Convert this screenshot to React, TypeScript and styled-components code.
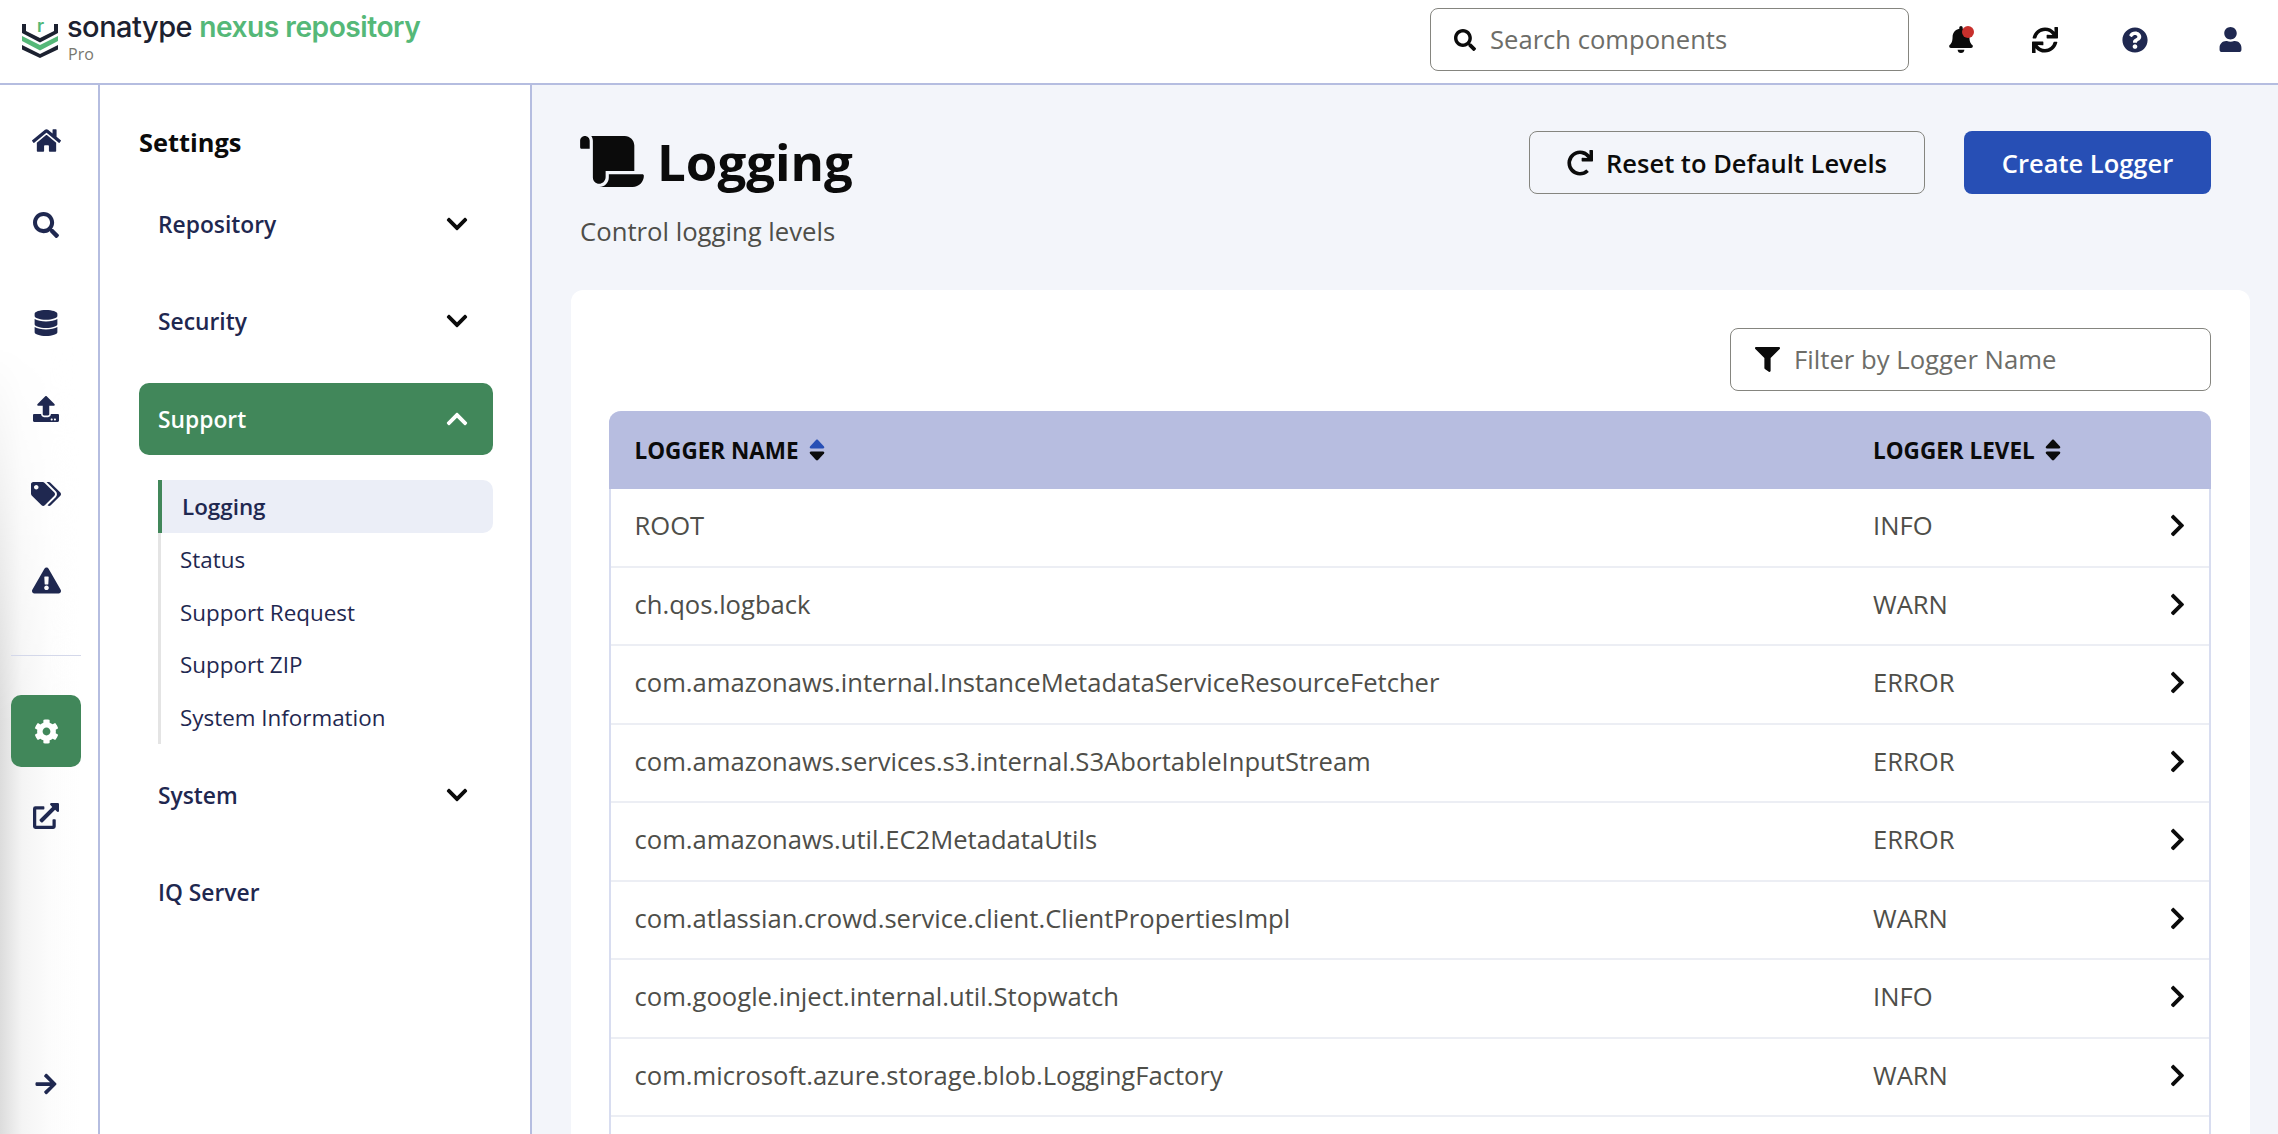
import React from "react";
import styled, { createGlobalStyle } from "styled-components";
import {
  FaHome, FaSearch, FaDatabase, FaUpload, FaTags, FaExclamationTriangle, FaCog,
  FaExternalLinkAlt, FaArrowRight, FaChevronDown, FaChevronUp, FaChevronRight,
  FaBell, FaSync, FaQuestionCircle, FaUser, FaRedo, FaFilter, FaScroll,
} from "react-icons/fa";

const NAVY = "#1f2850";
const GREEN = "#41875a";
const LINE = "#b5bde0";
const BODY = '"Open Sans", "Noto Sans", sans-serif';

const Global = createGlobalStyle`
  html, body { margin: 0; padding: 0; height: 100%; background: #fff; overflow: hidden; }
  #root { height: 100%; }
  * { box-sizing: border-box; }
  body { font-family: ${BODY}; }
`;

const Page = styled.div`
  display: flex; flex-direction: column; width: 100%; height: 100vh; overflow: hidden;
`;
const Header = styled.header`
  flex: 0 0 85px; display: flex; align-items: center; justify-content: space-between;
  background: #fff; border-bottom: 2px solid ${LINE}; padding: 0 34.5px 4px 22px;
`;
const Brand = styled.div`display: flex; align-items: flex-start; gap: 10px; height: 58px;`;
const LogoMark = styled.svg`margin-top: 9.5px; overflow: visible;`;
const BrandText = styled.div`display: flex; flex-direction: column; margin-top: -1px; margin-left: -1px;`;
const BrandLine = styled.div`
  display: flex; gap: 7px; font-family: Inter, sans-serif; font-size: 29px; line-height: 34px;
  font-weight: 500; letter-spacing: -0.5px;
`;
const BrandDark = styled.span`color: #1c2130;`;
const BrandGreen = styled.span`color: #55b878; font-weight: 600; font-size: 28.2px;`;
const BrandEdition = styled.span`font-size: 16px; line-height: 20px; color: #77776f; margin-left: 1px;`;
const HeaderTools = styled.div`display: flex; align-items: center;`;
const SearchBox = styled.div`
  width: 479px; height: 63px; display: flex; align-items: center; gap: 14px; padding-left: 23px;
  border: 1px solid #85857f; border-radius: 8px; background: #fff; margin-right: 39px;
  font-size: 25.6px; color: #6d6d68;
`;
const HeaderIcon = styled.span<{ $w: number; $color?: string; $ml?: number }>`
  position: relative; display: flex; justify-content: center; width: ${p => p.$w}px;
  margin-left: ${p => p.$ml || 0}px;
  color: ${p => p.$color || "#0b0b0b"};
`;
const Dot = styled.span`
  position: absolute; top: 0; right: 0; width: 12px; height: 12px; border-radius: 50%; background: #c8302c;
`;

const Body = styled.div`flex: 1; display: flex; min-height: 0;`;
const Rail = styled.nav`
  position: relative; flex: 0 0 100px; display: flex; flex-direction: column; padding: 19px 17px 14px 11px;
  gap: 13px; border-right: 2px solid ${LINE}; background: #fff;
  &::before {
    content: ""; position: absolute; inset: 0 auto 0 0; width: 80px; pointer-events: none;
    background: linear-gradient(to right, #dcdcdc, #f4f4f4 22px, #fcfcfc 50px, transparent 80px);
    -webkit-mask-image: linear-gradient(to bottom, transparent 260px, #000 640px);
    mask-image: linear-gradient(to bottom, transparent 260px, #000 640px);
  }
`;
const RailItem = styled.div<{ $active?: boolean; $mt?: number }>`
  position: relative; flex: 0 0 72px; display: flex; align-items: center; justify-content: center;
  border-radius: 10px; margin-top: ${p => p.$mt || 0}px;
  background: ${p => (p.$active ? GREEN : "transparent")};
  color: ${p => (p.$active ? "#fff" : NAVY)};
`;
const RailDivider = styled.div`position: relative; flex: 0 0 1px; background: #d4d8ea; margin: 26px 0 26px;`;
const RailSpacer = styled.div`flex: 1;`;

const SubNav = styled.aside`
  flex: 0 0 432px; padding: 39px 37px 0 39px; border-right: 2px solid ${LINE}; background: #fff;
  display: flex; flex-direction: column;
`;
const SubTitle = styled.h2`
  margin: 0 0 28px; font-size: 25.4px; line-height: 36px; font-weight: 700; color: #0b0b0b;
`;
const NavHead = styled.div<{ $open?: boolean }>`
  height: 72px; display: flex; align-items: center; justify-content: space-between;
  padding: 0 24px 0 19px; border-radius: 10px; font-size: 22.8px; font-weight: 600;
  background: ${p => (p.$open ? GREEN : "transparent")};
  color: ${p => (p.$open ? "#fff" : NAVY)};
  margin-top: ${p => (p.$open ? "1px" : "0")};
  margin-bottom: 25px;
  & svg { color: ${p => (p.$open ? "#fff" : "#0b0b0b")}; }
`;
const SubList = styled.div`
  margin: 0 0 15px 19px; border-left: 3px solid #e4e4e4; display: flex; flex-direction: column;
`;
const SubItem = styled.div<{ $active?: boolean }>`
  height: ${p => (p.$active ? "53px" : "52.8px")}; display: flex; align-items: center;
  padding-left: ${p => (p.$active ? "20px" : "19px")};
  font-size: 22.4px; color: ${NAVY}; font-weight: ${p => (p.$active ? 600 : 400)};
  margin-left: ${p => (p.$active ? "-3px" : "0")};
  background: ${p => (p.$active ? "#ebeef7" : "transparent")};
  border-left: ${p => (p.$active ? `4px solid ${GREEN}` : "none")};
  border-radius: ${p => (p.$active ? "0 10px 10px 0" : "0")};
`;

const Main = styled.main`
  flex: 1; min-width: 0; background: #f3f5fa; padding: 46px 28px 0 39px; display: flex; flex-direction: column;
`;
const PageHead = styled.div`
  display: flex; justify-content: space-between; align-items: flex-start; padding-left: 9px; padding-right: 39px;
  height: 159px;
`;
const TitleBlock = styled.div`display: flex; flex-direction: column; margin-top: -2px;`;
const TitleRow = styled.div`
  display: flex; align-items: center; gap: 13px; color: #0b0b0b;
  & svg { width: 64px; height: 51px; }
`;
const Title = styled.h1`
  margin: 0; font-size: 51px; line-height: 64px; font-weight: 700; color: #0b0b0b;
`;
const Subtitle = styled.p`margin: 21px 0 0 0; font-size: 25.7px; line-height: 36px; color: #4e4e49;`;
const Buttons = styled.div`display: flex; gap: 39px;`;
const OutlineButton = styled.button`
  width: 396px; height: 63px; display: flex; align-items: center; justify-content: center; gap: 13px;
  border: 1px solid #85857f; border-radius: 8px; background: transparent; color: #0b0b0b;
  font: 600 25.5px ${BODY}; padding: 0;
`;
const PrimaryButton = styled.button`
  width: 247px; height: 63px; border: none; border-radius: 8px; background: #274fb5; color: #fff;
  font: 600 25.5px ${BODY}; padding: 0;
`;
const Card = styled.section`
  flex: 1; min-height: 0; overflow: hidden; background: #fff; border-radius: 12px 12px 0 0;
  padding: 38px 39px 0 38px; display: flex; flex-direction: column;
`;
const FilterRow = styled.div`display: flex; justify-content: flex-end; margin-bottom: 20px;`;
const FilterBox = styled.div`
  width: 481px; height: 63px; display: flex; align-items: center; gap: 14px; padding-left: 24px;
  border: 1px solid #85857f; border-radius: 8px; background: #fff; font-size: 25.7px; color: #6d6d68;
`;
const Table = styled.div`
  flex: 1; border: solid #d8ddf0; border-width: 0 2px; border-radius: 12px 12px 0 0;
  display: flex; flex-direction: column;
`;
const HeadRow = styled.div`
  flex: none; height: 78px; margin: 0 -2px; padding: 0 0 0 25.5px; background: #b7bde0; border-radius: 12px 12px 0 0;
  display: grid; grid-template-columns: 1238.5px 1fr; align-items: center;
`;
const HeadCell = styled.div`
  display: flex; align-items: center; gap: 10px; font-size: 22.5px; font-weight: 700; color: #0b0b0b;
`;
const Row = styled.div`
  flex: none; height: 78.5px; padding: 0 28px 3px 23.5px; display: grid; grid-template-columns: 1238.5px 1fr 16px; align-items: center;
  border-bottom: 2px solid #eceef4; font-size: 25.6px; color: #4e4e49;
  & svg { color: #0b0b0b; }
`;

const SortIcon: React.FC<{ $active?: boolean }> = ({ $active }) => (
  <svg width="16" height="22" viewBox="0 0 16 22" aria-hidden="true">
    <path d="M7 1 L1 7.5 C0.3 8.4 0.8 9.5 2 9.5 H14 C15.2 9.5 15.7 8.4 15 7.5 L9 1 C8.4 0.4 7.6 0.4 7 1 Z" fill={$active ? "#274fb5" : "#0b0b0b"} />
    <path d="M7 21 L1 14.5 C0.3 13.6 0.8 12.5 2 12.5 H14 C15.2 12.5 15.7 13.6 15 14.5 L9 21 C8.4 21.6 7.6 21.6 7 21 Z" fill="#0b0b0b" />
  </svg>
);

const Logo = () => (
  <LogoMark width="36" height="38" viewBox="0 0 36 38" aria-hidden="true">
    <path d="M0 4h4v7l14 7 14-7V4h4v9L18 22.5 0 13z" fill="#1c2130" />
    <path d="M0 16l18 9 18-9v5l-18 9.5L0 21z" fill="#55b878" />
    <path d="M0 25l18 9 18-9v4.5L18 38 0 29.5z" fill="#1c2130" />
    <text x="15" y="12" fontFamily="Inter, sans-serif" fontSize="18" fontWeight="600" fill="#55b878">r</text>
  </LogoMark>
);

const rows: [string, string][] = [
  ["ROOT", "INFO"],
  ["ch.qos.logback", "WARN"],
  ["com.amazonaws.internal.InstanceMetadataServiceResourceFetcher", "ERROR"],
  ["com.amazonaws.services.s3.internal.S3AbortableInputStream", "ERROR"],
  ["com.amazonaws.util.EC2MetadataUtils", "ERROR"],
  ["com.atlassian.crowd.service.client.ClientPropertiesImpl", "WARN"],
  ["com.google.inject.internal.util.Stopwatch", "INFO"],
  ["com.microsoft.azure.storage.blob.LoggingFactory", "WARN"],
];

export default function App() {
  return (
    <Page>
      <Global />
      <Header>
        <Brand>
          <Logo />
          <BrandText>
            <BrandLine>
              <BrandDark>sonatype</BrandDark>
              <BrandGreen>nexus repository</BrandGreen>
            </BrandLine>
            <BrandEdition>Pro</BrandEdition>
          </BrandText>
        </Brand>
        <HeaderTools>
          <SearchBox><FaSearch size={22} color="#0b0b0b" />Search components</SearchBox>
          <HeaderIcon $w={26}><FaBell size={27} /><Dot /></HeaderIcon>
          <HeaderIcon $w={26} $ml={57.5}><FaSync size={26} /></HeaderIcon>
          <HeaderIcon $w={26} $color={NAVY} $ml={64}><FaQuestionCircle size={26} /></HeaderIcon>
          <HeaderIcon $w={26} $color={NAVY} $ml={70}><FaUser size={25} /></HeaderIcon>
        </HeaderTools>
      </Header>
      <Body>
        <Rail>
          <RailItem><FaHome size={29} /></RailItem>
          <RailItem><FaSearch size={26} /></RailItem>
          <RailItem $mt={13}><FaDatabase size={26} /></RailItem>
          <RailItem $mt={1}><FaUpload size={26} /></RailItem>
          <RailItem><FaTags size={30} /></RailItem>
          <RailItem $mt={1}><FaExclamationTriangle size={29} /></RailItem>
          <RailDivider />
          <RailItem $active><FaCog size={25} /></RailItem>
          <RailItem><FaExternalLinkAlt size={26} /></RailItem>
          <RailSpacer />
          <RailItem><FaArrowRight size={24} /></RailItem>
        </Rail>
        <SubNav>
          <SubTitle>Settings</SubTitle>
          <NavHead>Repository<FaChevronDown size={24} /></NavHead>
          <NavHead>Security<FaChevronDown size={24} /></NavHead>
          <NavHead $open>Support<FaChevronUp size={24} /></NavHead>
          <SubList>
            <SubItem $active>Logging</SubItem>
            <SubItem>Status</SubItem>
            <SubItem>Support Request</SubItem>
            <SubItem>Support ZIP</SubItem>
            <SubItem>System Information</SubItem>
          </SubList>
          <NavHead>System<FaChevronDown size={24} /></NavHead>
          <NavHead>IQ Server</NavHead>
        </SubNav>
        <Main>
          <PageHead>
            <TitleBlock>
              <TitleRow><FaScroll /><Title>Logging</Title></TitleRow>
              <Subtitle>Control logging levels</Subtitle>
            </TitleBlock>
            <Buttons>
              <OutlineButton><FaRedo size={26} />Reset to Default Levels</OutlineButton>
              <PrimaryButton>Create Logger</PrimaryButton>
            </Buttons>
          </PageHead>
          <Card>
            <FilterRow>
              <FilterBox><FaFilter size={25} color="#0b0b0b" />Filter by Logger Name</FilterBox>
            </FilterRow>
            <Table>
              <HeadRow>
                <HeadCell>LOGGER NAME<SortIcon $active /></HeadCell>
                <HeadCell>LOGGER LEVEL<SortIcon /></HeadCell>
              </HeadRow>
              {rows.map(([name, level]) => (
                <Row key={name}>
                  <span>{name}</span>
                  <span>{level}</span>
                  <FaChevronRight size={25} />
                </Row>
              ))}
            </Table>
          </Card>
        </Main>
      </Body>
    </Page>
  );
}
